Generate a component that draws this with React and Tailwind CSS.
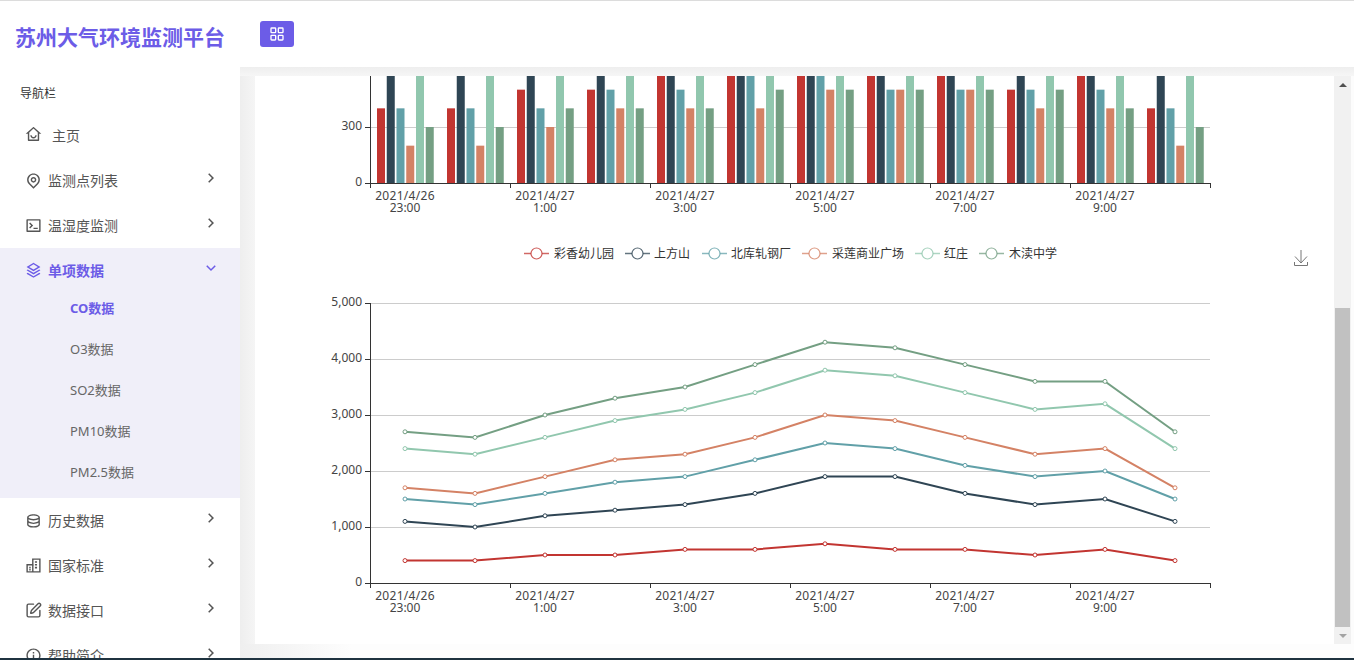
import { LayoutGrid, SquarePen } from 'lucide-react';
import {
    RiHomeSmileLine,
    RiMapPinLine,
    RiTerminalBoxLine,
    RiStackLine,
    RiDatabase2Line,
    RiInformationLine,
    RiArrowRightSLine,
    RiArrowDownSLine,
} from 'react-icons/ri';

const FONT = "'Noto Sans', 'Noto Sans CJK SC', sans-serif";

const COLORS = ['#c23531', '#2f4554', '#61a0a8', '#d48265', '#91c7ae', '#749f83'];
const NAMES = ['彩香幼儿园', '上方山', '北库轧钢厂', '采莲商业广场', '红庄', '木渎中学'];

// raw values per series, the line chart stacks them
const SERIES = [
    [400, 400, 500, 500, 600, 600, 700, 600, 600, 500, 600, 400],
    [700, 600, 700, 800, 800, 1000, 1200, 1300, 1000, 900, 900, 700],
    [400, 400, 400, 500, 500, 600, 600, 500, 500, 500, 500, 400],
    [200, 200, 300, 400, 400, 400, 500, 500, 500, 400, 400, 200],
    [700, 700, 700, 700, 800, 800, 800, 800, 800, 800, 800, 700],
    [300, 300, 400, 400, 400, 500, 500, 500, 500, 500, 400, 300],
];

const TICKS = [
    ['2021/4/26', '23:00'],
    ['2021/4/27', '1:00'],
    ['2021/4/27', '3:00'],
    ['2021/4/27', '5:00'],
    ['2021/4/27', '7:00'],
    ['2021/4/27', '9:00'],
];

const X0 = 370;
const X1 = 1210;
const STEP = (X1 - X0) / 12;
const TICK_TEXT = '#444';

const BuildingIcon = ({ size, className }) => (
    <svg width={size} height={size} viewBox="0 0 24 24" fill="none" stroke="currentColor" strokeWidth="2" className={className}>
        <path d="M3 21V11h8V3h10v18z" />
        <path d="M11 11v10" />
        <path d="M6 15h2M6 18h2M14 7h3M14 11h3M14 15h3" strokeWidth="2.2" />
    </svg>
);

const AxisX = ({ y }) => (
    <g>
        <line x1={X0} x2={X1} y1={y + 0.5} y2={y + 0.5} stroke="#333" />
        {[0, 1, 2, 3, 4, 5, 6].map((i) => (
            <line key={i} x1={X0 + i * 140 + 0.5} x2={X0 + i * 140 + 0.5} y1={y} y2={y + 5} stroke="#333" />
        ))}
        {TICKS.map((t, i) => (
            <g key={i}>
                <text x={X0 + i * 140 + 35} y={y + 17} textAnchor="middle" fontSize="12" letterSpacing="0.3" fill={TICK_TEXT}>{t[0]}</text>
                <text x={X0 + i * 140 + 35} y={y + 29} textAnchor="middle" fontSize="12" fill={TICK_TEXT}>{t[1]}</text>
            </g>
        ))}
    </g>
);

const BarChart = () => {
    const base = 183 - 76;
    const k = 56 / 300;
    return (
        <svg width="1079" height="164" viewBox="255 0 1079 164" className="block shrink-0" style={{ fontFamily: FONT }}>
            <line x1={X0} x2={X1} y1={base - 56 + 0.5} y2={base - 56 + 0.5} stroke="#ccc" />
            <line x1={X0 + 0.5} x2={X0 + 0.5} y1={0} y2={base} stroke="#333" />
            <line x1={X0 - 5} x2={X0} y1={base - 56 + 0.5} y2={base - 56 + 0.5} stroke="#333" />
            <line x1={X0 - 5} x2={X0} y1={base + 0.5} y2={base + 0.5} stroke="#333" />
            <text x={X0 - 8} y={base - 53} textAnchor="end" fontSize="12" fill={TICK_TEXT}>300</text>
            <text x={X0 - 8} y={base + 3} textAnchor="end" fontSize="12" fill={TICK_TEXT}>0</text>
            {SERIES.map((vals, s) =>
                vals.map((v, i) => {
                    const h = v * k;
                    const x = X0 + 7 + i * STEP + s * 9.75;
                    return <rect key={`${s}-${i}`} x={x} y={base - h} width="8" height={h} fill={COLORS[s]} />;
                })
            )}
            <AxisX y={base} />
        </svg>
    );
};

const LEGEND_X = [524, 625, 702, 802, 915, 979];
const LEGEND_TEXT_X = [554, 654, 731, 832, 944, 1009];

const LineChart = () => {
    const base = 583 - 240;
    const k = 56 / 1000;
    const stacked = SERIES[0].map(() => 0);
    const lines = SERIES.map((vals) => vals.map((v, i) => (stacked[i] += v)));
    return (
        <svg width="1079" height="404" viewBox="255 0 1079 404" className="block shrink-0" style={{ fontFamily: FONT }}>
            {NAMES.map((name, i) => (
                <g key={name}>
                    <line x1={LEGEND_X[i]} x2={LEGEND_X[i] + 25} y1={13.5} y2={13.5} stroke={COLORS[i]} strokeOpacity="0.75" strokeWidth="1.5" />
                    <circle cx={LEGEND_X[i] + 12.5} cy={13.5} r="5.5" fill="#fff" stroke={COLORS[i]} strokeWidth="1.2" strokeOpacity="0.8" />
                    <text x={LEGEND_TEXT_X[i]} y={17.5} fontSize="12" fill="#333">{name}</text>
                </g>
            ))}
            {/* save-as-image icon */}
            <path d="M1294.5 22v3.5h13V22M1301 10v13M1295 16.5l6 6.5 6-6.5" fill="none" stroke="#777" strokeWidth="1" />
            {[1, 2, 3, 4, 5].map((n) => (
                <g key={n}>
                    <line x1={X0} x2={X1} y1={base - n * 56 + 0.5} y2={base - n * 56 + 0.5} stroke="#ccc" />
                    <line x1={X0 - 5} x2={X0} y1={base - n * 56 + 0.5} y2={base - n * 56 + 0.5} stroke="#333" />
                    <text x={X0 - 8} y={base - n * 56 + 3} textAnchor="end" fontSize="12" fill={TICK_TEXT}>{n},000</text>
                </g>
            ))}
            <line x1={X0 + 0.5} x2={X0 + 0.5} y1={base - 280} y2={base} stroke="#333" />
            <line x1={X0 - 5} x2={X0} y1={base + 0.5} y2={base + 0.5} stroke="#333" />
            <text x={X0 - 8} y={base + 3} textAnchor="end" fontSize="12" fill={TICK_TEXT}>0</text>
            <AxisX y={base} />
            {lines.map((vals, s) => (
                <g key={s}>
                    <polyline
                        points={vals.map((v, i) => `${X0 + STEP / 2 + i * STEP},${base - v * k}`).join(' ')}
                        fill="none"
                        stroke={COLORS[s]}
                        strokeWidth="2"
                    />
                    {vals.map((v, i) => (
                        <circle key={i} cx={X0 + STEP / 2 + i * STEP} cy={base - v * k} r="2" fill="#fff" stroke={COLORS[s]} />
                    ))}
                </g>
            ))}
        </svg>
    );
};

const NavItem = ({ icon: Icon, label, open = false }) => (
    <div className={`h-[45px] pl-[25px] pr-[20px] flex items-center justify-between ${open ? 'text-[#6c5ce7] font-bold' : 'text-[#555]'}`}>
        <div className="flex items-center gap-[6px]">
            <Icon size={17} className="-mt-[1px]" />
            <span className="text-sm">{label}</span>
        </div>
        {open
            ? <RiArrowDownSLine size={18} className="-mt-[5px]" />
            : <RiArrowRightSLine size={18} className="-mt-[5px]" />}
    </div>
);

const SubItem = ({ label, active = false }) => (
    <div className={`h-[41px] pl-[70px] flex items-center text-[13px] ${active ? 'font-bold text-[#6c5ce7]' : 'text-[#666]'}`}>
        {label}
    </div>
);

const Sidebar = () => (
    <div className="w-[240px] shrink-0 h-full bg-white overflow-hidden">
        <div className="h-[74px] flex items-center pl-[15px] text-[21px] font-bold text-[#6c5ce7]">苏州大气环境监测平台</div>
        <div className="h-[38px] pb-[1px] pl-[20px] flex items-center text-xs text-[#333]">导航栏</div>
        <div className="h-[45px] pl-[25px] flex items-center text-[#555]">
            <RiHomeSmileLine size={17} className="-mt-[2px]" />
            <span className="text-sm ml-[10px]">主页</span>
        </div>
        <NavItem icon={RiMapPinLine} label="监测点列表" />
        <NavItem icon={RiTerminalBoxLine} label="温湿度监测" />
        <div className="bg-[#f0eff9] h-[250px]">
            <NavItem icon={RiStackLine} label="单项数据" open />
            <div className="-mt-[5px]">
                <SubItem label="CO数据" active />
                <SubItem label="O3数据" />
                <SubItem label="SO2数据" />
                <SubItem label="PM10数据" />
                <SubItem label="PM2.5数据" />
            </div>
        </div>
        <NavItem icon={RiDatabase2Line} label="历史数据" />
        <NavItem icon={BuildingIcon} label="国家标准" />
        <NavItem icon={SquarePen} label="数据接口" />
        <NavItem icon={RiInformationLine} label="帮助简介" />
    </div>
);

const Scrollbar = () => (
    <div className="w-[17px] shrink-0 bg-[#f1f1f1] flex flex-col items-center">
        <div className="h-[17px] flex items-center justify-center">
            <div className="w-0 h-0 border-x-[4px] border-x-transparent border-b-[4px] border-b-[#505050]" />
        </div>
        <div className="h-[215px]" />
        <div className="w-[15px] flex-1 bg-[#c1c1c1]" />
        <div className="h-[17px] flex items-center justify-center">
            <div className="w-0 h-0 border-x-[4px] border-x-transparent border-t-[4px] border-t-[#a3a3a3]" />
        </div>
    </div>
);

const App = () => (
    <div className="w-full h-screen flex flex-col overflow-hidden bg-white" style={{ fontFamily: FONT }}>
        <div className="h-px bg-[#dcdcdc] shrink-0" />
        <div className="flex-1 flex min-h-0">
            <Sidebar />
            <div className="flex-1 min-w-0 flex flex-col bg-[#fcfcfc]">
                <div className="h-[66px] shrink-0 bg-white pl-[20px] pt-[20px]">
                    <button className="w-[34px] h-[26px] rounded-[3px] bg-[#6c5ce7] flex items-center justify-center text-white">
                        <LayoutGrid size={16} strokeWidth={2} />
                    </button>
                </div>
                <div className="h-[9px] shrink-0 bg-gradient-to-b from-[#eeeeee] to-[#f6f6f6]" />
                <div className="flex-1 min-h-0 flex">
                    <div className="w-[15px] shrink-0 bg-gradient-to-r from-[#eeeeee] to-[#f5f5f5]" />
                    <div className="flex-1 min-w-0 bg-white overflow-hidden">
                        <BarChart />
                        <LineChart />
                    </div>
                    <Scrollbar />
                    <div className="w-[3px] shrink-0" />
                </div>
                <div className="h-[14px] shrink-0 bg-gradient-to-r from-[#efefef] to-[#fdfdfd] to-[10%]" />
            </div>
        </div>
        <div className="h-[2px] bg-[#1f3340] shrink-0" />
    </div>
);

export default App;
